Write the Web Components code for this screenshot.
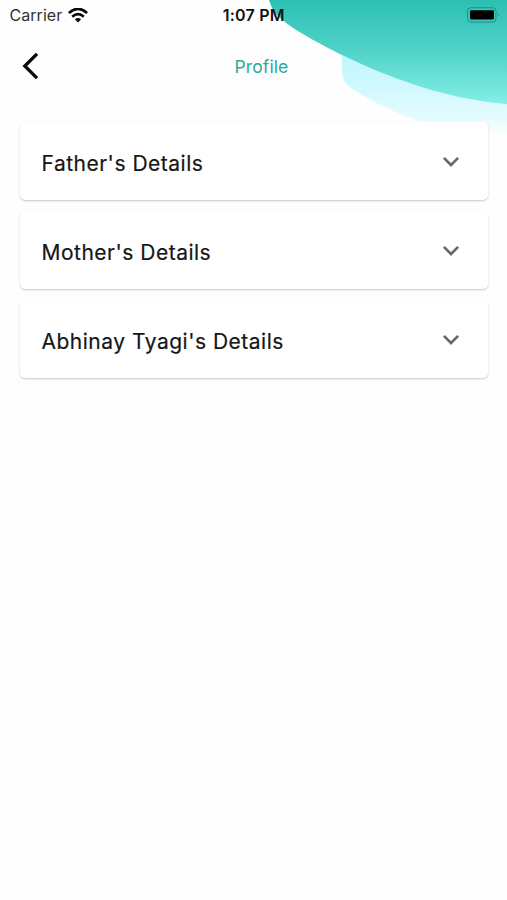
<!DOCTYPE html>
<html lang="en">
<head>
<meta charset="utf-8">
<title>Profile</title>
<style>
html,body{margin:0;height:100%;background:#fefefe}
</style>
</head>
<body>
<profile-screen></profile-screen>
<script>
const define = (name, markup) => customElements.define(name, class extends HTMLElement {
  constructor() {
    super();
    const t = document.createElement('template');
    t.innerHTML = markup;
    this.attachShadow({mode: 'open'}).append(t.content.cloneNode(true));
  }
});

define('corner-waves', `
<style>:host{display:block;position:absolute;top:0;right:0;width:507px;height:150px;z-index:0}svg{display:block}</style>
<svg width="507" height="150" viewBox="0 0 507 150">
  <defs>
    <linearGradient id="teal" gradientUnits="userSpaceOnUse" x1="0" y1="0" x2="0" y2="104"><stop stop-color="#2dbfb3"/><stop offset=".5" stop-color="#51d3c9"/><stop offset="1" stop-color="#84efe6"/></linearGradient>
    <linearGradient id="sky" gradientUnits="userSpaceOnUse" x1="0" y1="55" x2="0" y2="135"><stop stop-color="#c2f6fd"/><stop offset=".35" stop-color="#cdf8fe"/><stop offset=".8" stop-color="#e6fcff"/><stop offset="1" stop-color="#fefefe"/></linearGradient>
  </defs>
  <path fill="url(#sky)" d="M342 50V72Q342 81 350 87Q362 97 400 114Q440 132 507 137V50Z"/>
  <path fill="url(#teal)" d="M269 0C272 10 277 16 285 22C296 31 320 44 342 55C390 78 445 99 507 104V0Z"/>
</svg>`);

define('status-bar', `
<style>
:host{display:grid;grid-template-columns:1fr auto 1fr;align-items:center;height:30px;padding:0 7px 0 9.5px;position:relative;font-size:16px;color:#333}
.left{display:flex;align-items:center;gap:5.5px;letter-spacing:.05px}
.time{font-weight:600;font-size:16px;color:#111;letter-spacing:.25px;margin-right:2px}
.battery{justify-self:end}
svg{display:block}
</style>
<div class="left"><span>Carrier</span>
<svg width="20" height="15" viewBox="0 0 20 15" fill="none" stroke="#080808"><path stroke-width="2.7" d="M.9 5Q10-3.2 19.1 5"/><path stroke-width="2.6" d="M4.2 8.8Q10 3.6 15.8 8.8"/><path fill="#080808" stroke="none" d="M6.9 11.3Q10 8.7 13.1 11.3L10 14.4Z"/></svg></div>
<span class="time">1:07 PM</span>
<svg class="battery" width="33" height="16" viewBox="0 0 33 16"><rect x=".5" y=".7" width="28.5" height="14.4" rx="3.5" fill="none" stroke="#238f87"/><rect x="3" y="3.2" width="24" height="9.2" rx="1.3"/><path fill="#238f87" d="M30.8 5.8Q33 7.8 30.8 10Z"/></svg>`);

define('nav-header', `
<style>
:host{display:grid;grid-template-columns:1fr auto 1fr;align-items:center;height:72px;padding:0 6px 0 22px;position:relative}
svg{display:block}
.title{font-size:17.5px;color:#2aab9b;letter-spacing:.1px}
</style>
<svg width="18" height="28" viewBox="0 0 18 28" fill="none" stroke="#080808" stroke-width="3.3"><path d="M15 1.8L2.8 14L15 26.2"/></svg>
<span class="title"><slot></slot></span>`);

define('detail-card', `
<style>
:host{display:flex;align-items:center;justify-content:space-between;box-sizing:border-box;height:78px;padding:4px 28.5px 0 21.5px;background:#fff;border-radius:5px;box-shadow:0 1px 2px rgba(0,0,0,.22);font-size:21px;color:#161616;letter-spacing:.5px;-webkit-text-stroke:.2px #161616}
svg{display:block;margin-top:-3px}
</style>
<span class="label"><slot></slot></span>
<svg width="18" height="12" viewBox="0 0 18 12" fill="none" stroke="#696969" stroke-width="2.7"><path d="M1.9 1.9L9 9L16.1 1.9"/></svg>`);

define('profile-screen', `
<style>
:host{display:block;position:relative;min-height:100vh;background:#fefefe;font-family:Inter,"Liberation Sans",sans-serif;overflow:hidden}
main{display:grid;gap:11px;padding:20px 19px 0 20px;position:relative}
</style>
<corner-waves></corner-waves>
<status-bar></status-bar>
<nav-header>Profile</nav-header>
<main>
<detail-card>Father's Details</detail-card>
<detail-card>Mother's Details</detail-card>
<detail-card>Abhinay Tyagi's Details</detail-card>
</main>`);
</script>
</body>
</html>
